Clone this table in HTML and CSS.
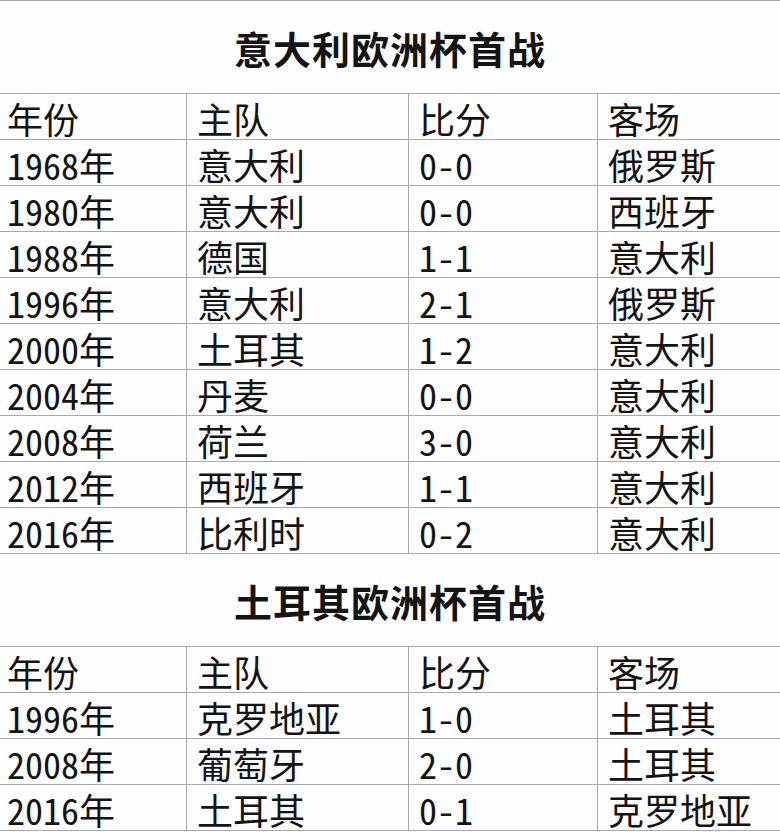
FILE: index.html
```html
<!DOCTYPE html>
<html lang="zh">
<head>
<meta charset="utf-8">
<link rel="stylesheet" href="styles.css">
</head>
<body>
<div class="sheet">
  <div class="title">意大利欧洲杯首战</div>
  <div class="row"><div class="cell">年份</div><div class="cell">主队</div><div class="cell">比分</div><div class="cell">客场</div></div>
  <div class="row"><div class="cell">1968年</div><div class="cell">意大利</div><div class="cell">0-0</div><div class="cell">俄罗斯</div></div>
  <div class="row"><div class="cell">1980年</div><div class="cell">意大利</div><div class="cell">0-0</div><div class="cell">西班牙</div></div>
  <div class="row"><div class="cell">1988年</div><div class="cell">德国</div><div class="cell">1-1</div><div class="cell">意大利</div></div>
  <div class="row"><div class="cell">1996年</div><div class="cell">意大利</div><div class="cell">2-1</div><div class="cell">俄罗斯</div></div>
  <div class="row"><div class="cell">2000年</div><div class="cell">土耳其</div><div class="cell">1-2</div><div class="cell">意大利</div></div>
  <div class="row"><div class="cell">2004年</div><div class="cell">丹麦</div><div class="cell">0-0</div><div class="cell">意大利</div></div>
  <div class="row"><div class="cell">2008年</div><div class="cell">荷兰</div><div class="cell">3-0</div><div class="cell">意大利</div></div>
  <div class="row"><div class="cell">2012年</div><div class="cell">西班牙</div><div class="cell">1-1</div><div class="cell">意大利</div></div>
  <div class="row"><div class="cell">2016年</div><div class="cell">比利时</div><div class="cell">0-2</div><div class="cell">意大利</div></div>
  <div class="title">土耳其欧洲杯首战</div>
  <div class="row"><div class="cell">年份</div><div class="cell">主队</div><div class="cell">比分</div><div class="cell">客场</div></div>
  <div class="row"><div class="cell">1996年</div><div class="cell">克罗地亚</div><div class="cell">1-0</div><div class="cell">土耳其</div></div>
  <div class="row"><div class="cell">2008年</div><div class="cell">葡萄牙</div><div class="cell">2-0</div><div class="cell">土耳其</div></div>
  <div class="row last"><div class="cell">2016年</div><div class="cell">土耳其</div><div class="cell">0-1</div><div class="cell">克罗地亚</div></div>
</div>
</body>
</html>
```
FILE: styles.css
```css
html, body {
  margin: 0;
  padding: 0;
  background: #fefdff;
}
.sheet {
  width: 780px;
  overflow: hidden;
  font-family: "Noto Sans CJK SC", "Noto Sans", sans-serif;
  font-feature-settings: "hwid";
  color: #141414;
}
.title {
  height: 93px;
  box-sizing: border-box;
  border-top: 1px solid #a8a8b0;
  display: flex;
  align-items: center;
  justify-content: center;
  font-size: 38px;
  font-weight: 700;
  letter-spacing: 1px;
  line-height: 1;
  padding-top: 2px;
}
.row {
  display: grid;
  grid-template-columns: 186px 222px 189px 1fr;
  height: 46px;
  box-sizing: border-box;
  border-top: 1px solid #a8a8b0;
}
.row.last {
  height: 47px;
  border-bottom: 1px solid #a8a8b0;
}
.cell {
  font-size: 36px;
  line-height: 42px;
  height: 45px;
  padding-left: 10px;
  padding-top: 3px;
  box-sizing: border-box;
  white-space: nowrap;
}
.cell:first-child {
  padding-left: 7px;
}
.cell + .cell {
  border-left: 1px solid #a8a8b0;
}
```
